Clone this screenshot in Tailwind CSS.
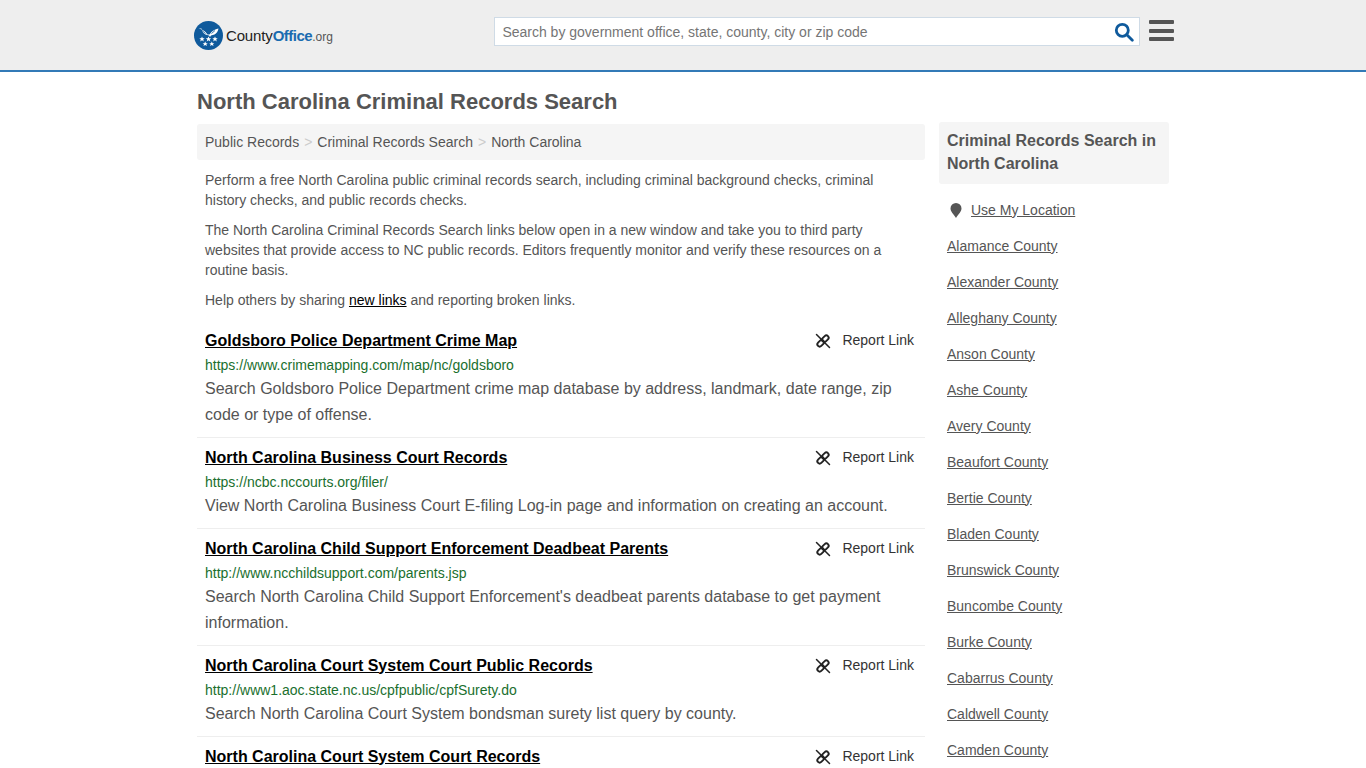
<!DOCTYPE html>
<html><head><meta charset="utf-8">
<script src="https://cdn.jsdelivr.net/npm/@tailwindcss/browser@4"></script>
<title>North Carolina Criminal Records Search</title></head>
<body class="font-['Liberation_Sans',Arial,sans-serif] text-[#555] bg-white h-[768px] overflow-hidden">
<header class="h-[72px] bg-[#eee] border-b-2 border-[#337ab7]">
  <div class="w-[982px] ml-[192px] flex items-start">
    <div class="w-[303px] pt-[20px] flex items-center h-[50px]">
      <svg class="ml-[2px]" width="29" height="29" viewBox="0 0 29 29"><circle cx="14.500" cy="14.500" r="14.500" fill="#0f5a9c"/><path d="M4.500 7.500c2.500 .5 5 1.500 7 3.500l2 2.500h2l2-2.500c2-2 4.500-3 7-3.500-.5 3-2 5-4 6l-3.500 1-1 1.500-1-1.500-3.500-1c-2-1-3.500-3-4-6z" fill="#fff"/><path d="M8 9.500l3.500 3M21 9.500l-3.500 3" stroke="#0f5a9c" stroke-width=".8"/><g fill="#fff"><path d="M8 15.500l.8 1.800h1.900l-1.500 1.200.6 1.900-1.800-1.100-1.800 1.100.6-1.900-1.500-1.200h1.900z"/><path d="M14.500 15.500l.8 1.800h1.900l-1.500 1.200.6 1.900-1.800-1.100-1.800 1.100.6-1.900-1.500-1.200h1.900z"/><path d="M21 15.500l.8 1.800h1.900l-1.500 1.200.6 1.900-1.800-1.100-1.800 1.100.6-1.900-1.500-1.200h1.900z"/><path d="M11.200 20.500l.8 1.700h1.800l-1.400 1.100.5 1.800-1.700-1.100-1.700 1.100.5-1.800-1.400-1.100h1.800z"/><path d="M17.800 20.500l.8 1.700h1.800l-1.400 1.100.5 1.800-1.700-1.100-1.700 1.100.5-1.800-1.400-1.100h1.800z"/></g></svg>
      <span class="ml-[3px] mt-[1px] text-[15px] tracking-[-0.15px] leading-none text-[#222]">County<span class="text-[#1a6bb0] font-bold tracking-[-0.5px]">Office</span><span class="text-[12px] text-[#555] tracking-normal">.org</span></span>
    </div>
    <div class="mt-[17px] w-[647px] h-[29px] bg-white border border-[#cfdbe6] flex items-center justify-between pl-[7px] pr-[5px]">
      <span class="text-[14px] text-[#757575] translate-y-[1px]">Search by government office, state, county, city or zip code</span>
      <svg width="20" height="20" viewBox="0 0 20 20" fill="none" stroke="#0f5a9c" stroke-width="2.800"><circle cx="8.300" cy="8.300" r="6"/><path d="M12.800 12.800l5.500 5.500" stroke-linecap="round"/></svg>
    </div>
    <div class="ml-[9px] mt-[20px] w-[25px] flex flex-col gap-[4.500px]">
      <div class="h-[4px] bg-[#555] rounded-[1px]"></div><div class="h-[4px] bg-[#555] rounded-[1px]"></div><div class="h-[4px] bg-[#555] rounded-[1px]"></div>
    </div>
  </div>
</header>
<div class="w-[972px] ml-[197px] flex gap-[14px] items-start">
  <main class="w-[728px] shrink-0">
    <h1 class="mt-[16px] h-[36px] text-[22px] leading-[27px] font-bold text-[#555]">North Carolina Criminal Records Search</h1>
    <nav class="h-[36px] bg-[#f5f5f5] rounded-[3px] px-[8px] flex items-center text-[14px]">
      <span>Public Records</span><span class="mx-[5px] text-[#ccc]">&gt;</span><span>Criminal Records Search</span><span class="mx-[5px] text-[#ccc]">&gt;</span><span>North Carolina</span>
    </nav>
    <div class="px-[8px] text-[14px] leading-[20px] pt-[10px]">
      <p class="mb-[10px]">Perform a free North Carolina public criminal records search, including criminal background checks, criminal history checks, and public records checks.</p>
      <p class="mb-[10px] pr-[30px]">The North Carolina Criminal Records Search links below open in a new window and take you to third party websites that provide access to NC public records. Editors frequently monitor and verify these resources on a routine basis.</p>
      <p>Help others by sharing <span class="text-black underline">new links</span> and reporting broken links.</p>
    </div>
    <div class="mt-[6px]">
      <article class="px-[8px] pt-[10px] pb-[9px] border-b border-[#eee]">
        <div class="flex justify-between items-center h-[29px]"><a class="text-[16px] font-bold text-black underline">Goldsboro Police Department Crime Map</a>
          <span class="flex items-center gap-[11px] text-[14px] text-[#333] pr-[3px]"><svg width="16" height="16" viewBox="0 0 16 16" fill="none" stroke="#222" stroke-width="1.900" stroke-linecap="round"><g transform="rotate(-45 8 8)"><rect x="7.500" y="5.700" width="7.500" height="4.600" rx="2.300"/><rect x="1" y="5.700" width="7.500" height="4.600" rx="2.300"/></g><path d="M1.500 1.500L14.500 14.500" stroke-width="1.500"/></svg>Report Link</span></div>
        <div class="text-[14px] leading-[20px] text-[#1a6f2e]">https://www.crimemapping.com/map/nc/goldsboro</div>
        <p class="text-[16px] leading-[26px] mt-[1px]">Search Goldsboro Police Department crime map database by address, landmark, date range, zip code or type of offense.</p>
      </article>
      <article class="px-[8px] pt-[5px] pb-[9px] border-b border-[#eee]">
        <div class="flex justify-between items-center h-[29px]"><a class="text-[16px] font-bold text-black underline">North Carolina Business Court Records</a>
          <span class="flex items-center gap-[11px] text-[14px] text-[#333] pr-[3px]"><svg width="16" height="16" viewBox="0 0 16 16" fill="none" stroke="#222" stroke-width="1.900" stroke-linecap="round"><g transform="rotate(-45 8 8)"><rect x="7.500" y="5.700" width="7.500" height="4.600" rx="2.300"/><rect x="1" y="5.700" width="7.500" height="4.600" rx="2.300"/></g><path d="M1.500 1.500L14.500 14.500" stroke-width="1.500"/></svg>Report Link</span></div>
        <div class="text-[14px] leading-[20px] text-[#1a6f2e]">https://ncbc.nccourts.org/filer/</div>
        <p class="text-[16px] leading-[26px] mt-[1px]">View North Carolina Business Court E-filing Log-in page and information on creating an account.</p>
      </article>
      <article class="px-[8px] pt-[5px] pb-[9px] border-b border-[#eee]">
        <div class="flex justify-between items-center h-[29px]"><a class="text-[16px] font-bold text-black underline">North Carolina Child Support Enforcement Deadbeat Parents</a>
          <span class="flex items-center gap-[11px] text-[14px] text-[#333] pr-[3px]"><svg width="16" height="16" viewBox="0 0 16 16" fill="none" stroke="#222" stroke-width="1.900" stroke-linecap="round"><g transform="rotate(-45 8 8)"><rect x="7.500" y="5.700" width="7.500" height="4.600" rx="2.300"/><rect x="1" y="5.700" width="7.500" height="4.600" rx="2.300"/></g><path d="M1.500 1.500L14.500 14.500" stroke-width="1.500"/></svg>Report Link</span></div>
        <div class="text-[14px] leading-[20px] text-[#1a6f2e]">http://www.ncchildsupport.com/parents.jsp</div>
        <p class="text-[16px] leading-[26px] mt-[1px]">Search North Carolina Child Support Enforcement's deadbeat parents database to get payment information.</p>
      </article>
      <article class="px-[8px] pt-[5px] pb-[9px] border-b border-[#eee]">
        <div class="flex justify-between items-center h-[29px]"><a class="text-[16px] font-bold text-black underline">North Carolina Court System Court Public Records</a>
          <span class="flex items-center gap-[11px] text-[14px] text-[#333] pr-[3px]"><svg width="16" height="16" viewBox="0 0 16 16" fill="none" stroke="#222" stroke-width="1.900" stroke-linecap="round"><g transform="rotate(-45 8 8)"><rect x="7.500" y="5.700" width="7.500" height="4.600" rx="2.300"/><rect x="1" y="5.700" width="7.500" height="4.600" rx="2.300"/></g><path d="M1.500 1.500L14.500 14.500" stroke-width="1.500"/></svg>Report Link</span></div>
        <div class="text-[14px] leading-[20px] text-[#1a6f2e]">http://www1.aoc.state.nc.us/cpfpublic/cpfSurety.do</div>
        <p class="text-[16px] leading-[26px] mt-[1px]">Search North Carolina Court System bondsman surety list query by county.</p>
      </article>
      <article class="px-[8px] pt-[5px]">
        <div class="flex justify-between items-center h-[29px]"><a class="text-[16px] font-bold text-black underline">North Carolina Court System Court Records</a>
          <span class="flex items-center gap-[11px] text-[14px] text-[#333] pr-[3px]"><svg width="16" height="16" viewBox="0 0 16 16" fill="none" stroke="#222" stroke-width="1.900" stroke-linecap="round"><g transform="rotate(-45 8 8)"><rect x="7.500" y="5.700" width="7.500" height="4.600" rx="2.300"/><rect x="1" y="5.700" width="7.500" height="4.600" rx="2.300"/></g><path d="M1.500 1.500L14.500 14.500" stroke-width="1.500"/></svg>Report Link</span></div>
      </article>
    </div>
  </main>
  <aside class="w-[230px] shrink-0 pt-[50px]">
    <div class="h-[62px] bg-[#f5f5f5] rounded-[3px] px-[8px] pt-[7px] text-[16px] leading-[23px] font-bold">Criminal Records Search in North Carolina</div>
    <ul class="px-[8px] pt-[8px] text-[14px] [&>li]:h-[36px] [&>li]:flex [&>li]:items-center [&>li]:underline">
      <li><svg class="ml-[3px] mr-[9px]" width="12" height="15" viewBox="0 0 12 15"><path d="M6 15C3.500 11 .5 8.500 .5 5.500a5.500 5.500 0 0 1 11 0C11.500 8.500 8.500 11 6 15z" fill="#555"/></svg>Use My Location</li>
      <li>Alamance County</li><li>Alexander County</li><li>Alleghany County</li><li>Anson County</li><li>Ashe County</li><li>Avery County</li><li>Beaufort County</li><li>Bertie County</li><li>Bladen County</li><li>Brunswick County</li><li>Buncombe County</li><li>Burke County</li><li>Cabarrus County</li><li>Caldwell County</li><li>Camden County</li>
    </ul>
  </aside>
</div>
</body></html>
